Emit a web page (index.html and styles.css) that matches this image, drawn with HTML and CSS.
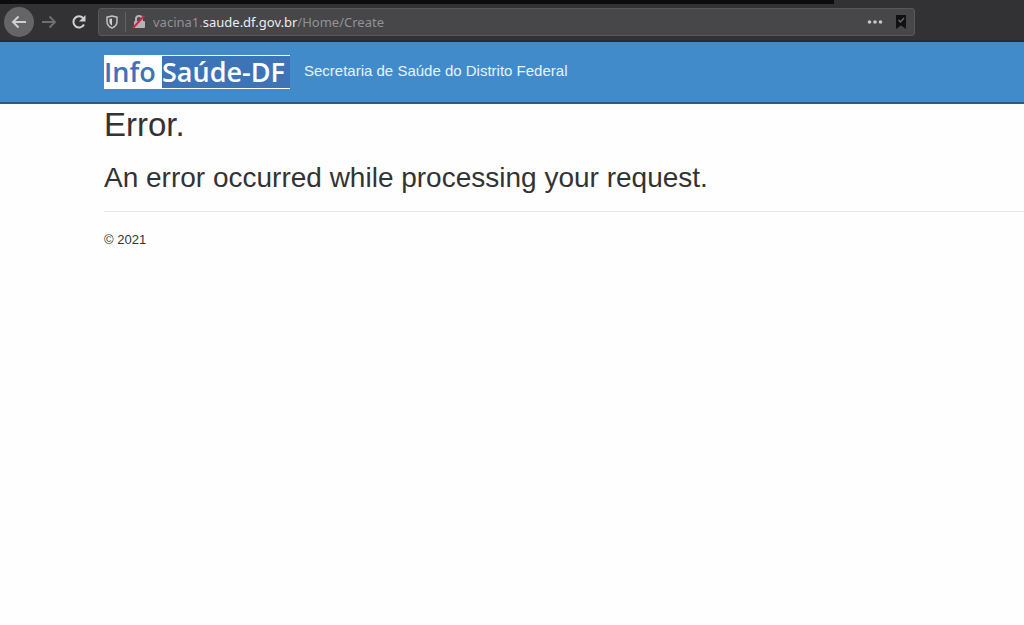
FILE: index.html
```
<!DOCTYPE html>
<html lang="pt-BR">
<head>
  <meta charset="UTF-8">
  <title>InfoSaúde-DF</title>
  <link rel="stylesheet" href="styles.css">
</head>
<body>
  <div class="browser">
    <div class="tab-strip"></div>
    <div class="toolbar">
      <button class="nav-button back" type="button" aria-label="Back">
        <svg width="16" height="16" viewBox="0 0 16 16"><path d="M15 8H2M7.500 2.500L2 8l5.500 5.500"/></svg>
      </button>
      <button class="nav-button forward" type="button" aria-label="Forward" disabled>
        <svg width="16" height="16" viewBox="0 0 16 16"><path d="M1 8h13M8.500 2.500L14 8l-5.500 5.500"/></svg>
      </button>
      <button class="nav-button" type="button" aria-label="Reload">
        <svg width="16" height="16" viewBox="0 0 16 16"><path d="M13 10.500A5.600 5.600 0 1 1 12.200 4.200"/><path class="solid" d="M14.500 1v6.500H8z"/></svg>
      </button>
      <div class="url-bar">
        <svg class="shield" width="14" height="14" viewBox="0 0 14 14">
          <path d="M7 1l5 1.200v4.300c0 3.200-2 5.300-5 6.500-3-1.200-5-3.300-5-6.500V2.200z"/>
          <path class="solid" d="M7 3.500v7c-1.800-1-2.600-2.200-2.600-4V4z"/>
        </svg>
        <span class="separator"></span>
        <svg class="lock" width="16" height="16" viewBox="0 0 16 16">
          <path class="shackle" d="M5 8V5a3 3 0 0 1 6 0v3"/>
          <rect x="3" y="7" width="11" height="7" rx="1"/>
          <path class="slash" d="M2 14L13 2"/>
        </svg>
        <div class="url" role="textbox" contenteditable="true" spellcheck="false" aria-label="Address">vacina1.<b>saude.df.gov.br</b>/Home/Create</div>
        <button class="bar-button" type="button" aria-label="Page actions">
          <svg class="dots" width="16" height="16" viewBox="0 0 16 16"><circle cx="2.500" cy="8" r="1.800"/><circle cx="8" cy="8" r="1.800"/><circle cx="13.500" cy="8" r="1.800"/></svg>
        </button>
        <button class="bar-button bookmark" type="button" aria-label="Bookmark">
          <svg width="16" height="16" viewBox="0 0 16 16"><path d="M3 1h10v14l-5-3.500L3 15z"/><path class="check" d="M5.500 6l2 2 3.500-4"/></svg>
        </button>
      </div>
    </div>
  </div>

  <header class="navbar">
    <a class="logo" href="#"><span class="logo-info">Info</span><span class="logo-saude">Saúde-DF</span></a>
    <a class="brand" href="#">Secretaria de Saúde do Distrito Federal</a>
  </header>

  <main class="content">
    <h1>Error.</h1>
    <h2>An error occurred while processing your request.</h2>
    <hr>
    <footer>
      <p>© 2021</p>
    </footer>
  </main>
</body>
</html>
```
FILE: styles.css
```
* {
  box-sizing: border-box;
}
body {
  margin: 0;
  font-family: "Liberation Sans", Arial, sans-serif;
  font-size: 13px;
  color: #333;
  background: #fefefe;
}
button {
  padding: 0;
  border: none;
  background: none;
}
svg {
  display: block;
  fill: none;
}

/* browser bar */
.browser {
  background: #323234;
  border-bottom: 2px solid #262b32;
}
.tab-strip {
  width: 81.4%;
  height: 4px;
  background: #0c0c0e;
}
.toolbar {
  display: flex;
  align-items: center;
  height: 36px;
  padding: 0 4px;
}
.nav-button {
  display: flex;
  align-items: center;
  justify-content: center;
  width: 30px;
  height: 30px;
  border-radius: 50%;
  stroke: #d0d0d2;
  stroke-width: 2;
}
.back {
  background: #656567;
}
.forward {
  stroke: #6e6e70;
}
.solid {
  fill: #d0d0d2;
  stroke: none;
}
.url-bar {
  display: flex;
  flex: 1;
  align-items: center;
  height: 28px;
  margin: 0 105px 0 4px;
  padding: 0 5px 0 6px;
  background: #474749;
  border: 1px solid #58585a;
  border-radius: 3px;
}
.shield {
  stroke: #c0c0c2;
  stroke-width: 1.5;
}
.separator {
  width: 1px;
  height: 20px;
  margin: 0 5px 0 6px;
  background: #626264;
}
.lock {
  fill: #b4b4b6;
}
.shackle {
  fill: none;
  stroke: #b4b4b6;
  stroke-width: 2;
}
.slash {
  stroke: #d0254a;
  stroke-width: 2;
}
.url {
  flex: 1;
  margin-left: 6px;
  font-family: "Noto Sans", sans-serif;
  font-size: 13px;
  line-height: 20px;
  color: #929294;
  white-space: nowrap;
  outline: none;
}
.url b {
  font-weight: normal;
  color: #ededef;
}
.bar-button {
  margin-left: 10px;
}
.dots {
  fill: #c8c8ca;
}
.bookmark path {
  fill: #111113;
}
.bookmark .check {
  fill: none;
  stroke: #666668;
  stroke-width: 1.5;
}

/* site header */
.navbar {
  display: flex;
  align-items: center;
  height: 62px;
  padding: 0 104px;
  background: #428bca;
  border-bottom: 2px solid #3c5870;
}
.logo {
  display: flex;
  height: 34px;
  border-top: 1px solid #fff;
  border-bottom: 1px solid #fff;
  font-family: "Open Sans", sans-serif;
  font-size: 27px;
  font-weight: 600;
  line-height: 32px;
  text-decoration: none;
}
.logo-info {
  width: 58px;
  color: #3d74b8;
  background: #fff;
}
.logo-saude {
  width: 128px;
  color: #fff;
  background: #3d74b8;
}
.brand {
  margin-left: 14px;
  padding-bottom: 4px;
  font-size: 15px;
  color: #e6f4ff;
  text-decoration: none;
}

/* page */
.content {
  padding-left: 104px;
}
h1,
h2 {
  margin: 0;
  font-weight: normal;
}
h1 {
  font-size: 33px;
  line-height: 42px;
}
h2 {
  margin-top: 14px;
  font-size: 28px;
  line-height: 36px;
}
hr {
  height: 1px;
  margin: 15px 0 20px;
  border: none;
  background: #e8e8e8;
}
footer p {
  margin: 0;
  line-height: 16px;
}
```
